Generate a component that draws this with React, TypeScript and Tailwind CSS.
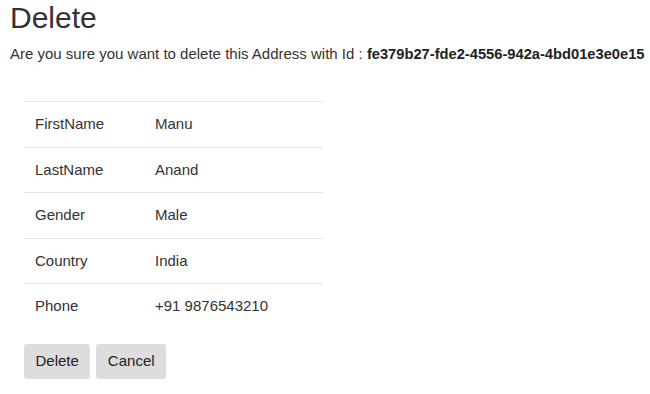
const rows = [
  { label: 'FirstName', value: 'Manu' },
  { label: 'LastName', value: 'Anand' },
  { label: 'Gender', value: 'Male' },
  { label: 'Country', value: 'India' },
  { label: 'Phone', value: '+91 9876543210' },
]

export default function App() {
  return (
    <div
      className="w-[650px] h-[394px] bg-white text-[#333] px-[10px] pt-[1px]"
      style={{ fontFamily: '"Liberation Sans", Arial, sans-serif' }}
    >
      <h2 className="text-[30px] leading-[33px] font-normal">Delete</h2>
      <p className="text-[15px] leading-[20px] mt-[10px] whitespace-nowrap">
        Are you sure you want to delete this Address with Id :{' '}
        <b className="font-bold text-[14.7px] text-[#222]">fe379b27-fde2-4556-942a-4bd01e3e0e15</b>
      </p>

      <table className="ml-[14px] mt-[37px] w-[299px] text-[15px] border-collapse">
        <tbody>
          {rows.map((r, i) => (
            <tr key={r.label} className={i === 0 ? 'border-t border-[#e8e8e8]' : ''}>
              <td
                className={`h-[45.5px] pl-[11px] w-[131px] ${i < rows.length - 1 ? 'border-b border-[#e4e4e4]' : ''}`}
              >
                {r.label}
              </td>
              <td className={`h-[45.5px] ${i < rows.length - 1 ? 'border-b border-[#e4e4e4]' : ''}`}>
                {r.value}
              </td>
            </tr>
          ))}
        </tbody>
      </table>

      <div className="ml-[14px] mt-[15px] flex gap-[6px]">
        <button className="h-[35px] px-[11.5px] bg-[#ddd] rounded-[3px] text-[15px] text-[#222]">Delete</button>
        <button className="h-[35px] px-[11.5px] bg-[#ddd] rounded-[3px] text-[15px] text-[#222]">Cancel</button>
      </div>
    </div>
  )
}
